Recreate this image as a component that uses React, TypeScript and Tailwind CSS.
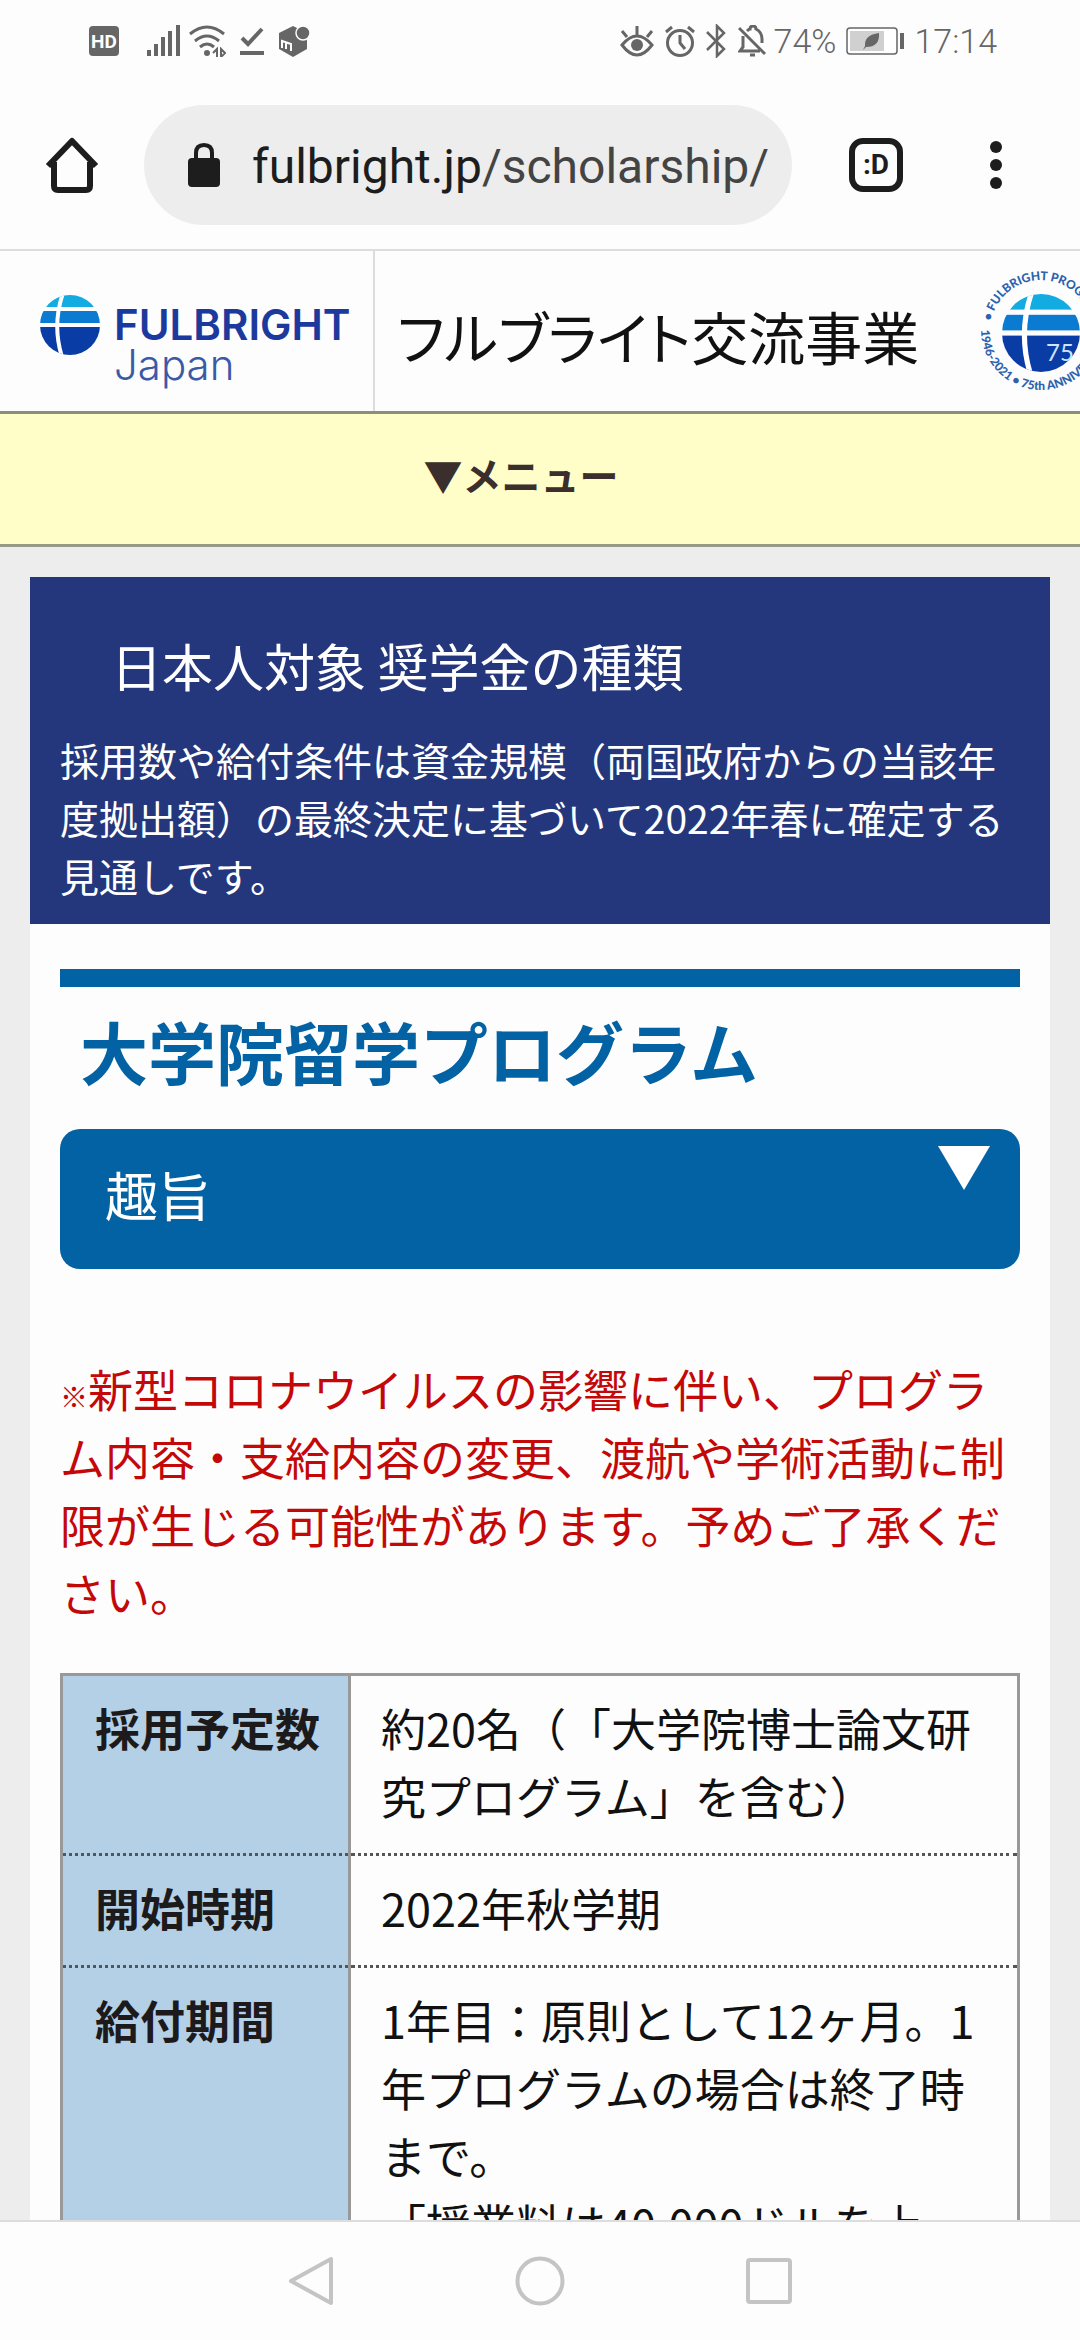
import type { ReactNode } from 'react'

const rows: { label: string; lines: string[] }[] = [
  { label: '採用予定数', lines: ['約20名（「大学院博士論文研究プログラム」を含む）'] },
  { label: '開始時期', lines: ['2022年秋学期'] },
  {
    label: '給付期間',
    lines: ['1年目：原則として12ヶ月。1年プログラムの場合は終了時まで。', '「授業料は40,000ドルを上'],
  },
]

function StatusBar() {
  return (
    <div className="flex h-[82px] shrink-0 items-center justify-between pl-[89px] pr-[83px] text-[#666]">
      <div className="flex items-center">
        <svg width="30" height="30" viewBox="0 0 30 30" aria-label="HD">
          <rect width="30" height="30" rx="4" fill="currentColor" />
          <text x="15" y="22" textAnchor="middle" fontFamily="Roboto" fontWeight="700" fontSize="19" fill="#fff">
            HD
          </text>
        </svg>
        <svg className="ml-7" width="34" height="32" viewBox="0 0 34 32" stroke="currentColor" strokeWidth="4">
          <path d="M2 31v-6M9 31V19M16 31V12M23 31V6M31 31V0" />
        </svg>
        <svg className="ml-2" width="37" height="32" viewBox="0 0 37 32" fill="none" stroke="currentColor" strokeWidth="3">
          <path d="M1 9Q18 -5 35 9M6 16Q18 6 30 16M11 22Q18 16 25 22" />
          <circle cx="18" cy="28" r="3" fill="currentColor" stroke="none" />
          <path d="M24 28l4-4v8M32 24v8l4-4z" strokeWidth="2" />
        </svg>
        <svg className="ml-3.5" width="24" height="30" viewBox="0 0 24 30" fill="none" stroke="currentColor" strokeWidth="4">
          <path d="M2 12l6 6L22 3M0 27h24" />
        </svg>
        <svg className="ml-3.5" width="32" height="34" viewBox="0 0 32 34">
          <path d="M15 2L1 9v16l14 8 14-8V9z" fill="currentColor" />
          <circle cx="25" cy="9" r="7" fill="currentColor" stroke="#fdfdfd" strokeWidth="1.5" />
          <path d="M4 24v-7l9 3v7M8 18v7" fill="none" stroke="#fdfdfd" strokeWidth="2" />
        </svg>
      </div>

      <div className="flex items-center font-[Roboto] text-[34px] leading-none font-light">
        <svg width="34" height="32" viewBox="0 0 34 32" fill="none" stroke="currentColor" strokeWidth="3">
          <path d="M2 20Q17 2 32 20Q17 40 2 20z M17 10V1M7 12L2 6M27 12l5-6" />
          <circle cx="17" cy="20" r="6" fill="currentColor" stroke="none" />
        </svg>
        <svg className="ml-2.5" width="32" height="32" viewBox="0 0 32 32" fill="none" stroke="currentColor" strokeWidth="3">
          <circle cx="16" cy="18" r="12.5" />
          <path d="M16 10v8l5 6M2 7l6-5M30 7l-6-5" />
        </svg>
        <svg className="ml-2.5" width="20" height="34" viewBox="0 0 20 34" fill="none" stroke="currentColor" strokeWidth="2.5">
          <path d="M1 8l17 17-7 7V2l7 7L1 26" />
        </svg>
        <svg className="ml-3" width="28" height="32" viewBox="0 0 28 32" fill="none" stroke="currentColor" strokeWidth="3">
          <path d="M1 3l26 26M5 11v11l-3 4h20M9 6q2-2 3-2 0-3 3-3t3 3q6 3 6 10v4" />
          <path d="M12 30h5" />
        </svg>
        <span className="ml-2">74%</span>
        <svg className="ml-2.5" width="60" height="28" viewBox="0 0 60 28">
          <rect x="1" y="1" width="50" height="26" rx="3" fill="#fff" stroke="currentColor" strokeWidth="1.5" />
          <rect x="4" y="4" width="34" height="20" fill="#d0d0d0" />
          <path d="M33 6q-15 2-14 13l-2 4 3-3q14 0 13-14z" fill="currentColor" />
          <rect x="54" y="6" width="4" height="16" fill="currentColor" />
        </svg>
        <span className="ml-2">17:14</span>
      </div>
    </div>
  )
}

function Toolbar() {
  return (
    <div className="flex h-[169px] shrink-0 items-start border-b-2 border-[#ddd] pt-[23px] pr-[78px] pl-[45px]">
      <button type="button" aria-label="ホーム" className="flex h-[120px] items-center">
        <svg width="54" height="56" viewBox="0 0 54 56" fill="none" stroke="#1d1d1d" strokeWidth="6">
          <path d="M3 29L27 4l24 25M9 25v24q0 4 4 4h28q4 0 4-4V25" strokeLinejoin="round" />
        </svg>
      </button>
      <div className="ml-[45px] flex h-[120px] min-w-0 flex-1 items-center rounded-full bg-[#ededed] pr-5 pl-11">
        <svg className="shrink-0" width="32" height="44" viewBox="0 0 32 44">
          <rect y="15" width="32" height="29" rx="4" fill="#1d1d1d" />
          <path d="M8 17v-7q0-8 8-8t8 8v7" fill="none" stroke="#1d1d1d" strokeWidth="4" />
        </svg>
        <span className="ml-8 pt-1 font-[Roboto] text-[48px] leading-none whitespace-nowrap text-[#1d1d1d]">
          fulbright.jp<span className="text-[#444]">/scholarship/</span>
        </span>
      </div>
      <button type="button" aria-label="タブ" className="ml-[57px] flex h-[120px] items-center">
        <span className="flex size-[54px] items-center justify-center rounded-[14px] border-6 border-[#1d1d1d] font-[Roboto] text-[28px] leading-none font-bold text-[#1d1d1d]">
          :D
        </span>
      </button>
      <button type="button" aria-label="その他" className="ml-[87px] flex h-[120px] flex-col items-center justify-center gap-1.5">
        <span className="size-3 rounded-full bg-[#1d1d1d]" />
        <span className="size-3 rounded-full bg-[#1d1d1d]" />
        <span className="size-3 rounded-full bg-[#1d1d1d]" />
      </button>
    </div>
  )
}

function Globe({ id, children }: { id: string; children?: ReactNode }) {
  return (
    <>
      <clipPath id={id}>
        <circle cx="30" cy="30" r="30" />
      </clipPath>
      <g clipPath={`url(#${id})`}>
        <rect width="60" height="12" fill="#12abe2" />
        <rect y="16" width="60" height="12" fill="#0a7bd0" />
        <rect y="32" width="60" height="28" fill="#0a3ca6" />
        <path d="M23 -2Q12 30 22 62" fill="none" stroke="#fff" strokeWidth="4" />
        {children}
      </g>
    </>
  )
}

function Seal() {
  return (
    <svg className="shrink-0" width="120" height="124" viewBox="-60 -62 120 124" aria-label="75th Anniversary">
      <g transform="translate(-39 -39) scale(1.3)">
        <Globe id="seal-globe" />
      </g>
      <text x="5" y="28" fontFamily="Lato" fontSize="24" fill="#cfe4ff">
        75
      </text>
      <path id="seal-top" d="M-50 -12A51 51 0 0 1 50 -12" fill="none" />
      <path id="seal-bottom" d="M-60 -3A60 60 0 0 0 60 -3" fill="none" />
      <g fontFamily="Lato" fontWeight="900" fontSize="12" fill="#2c62ae">
        <text>
          <textPath href="#seal-top">• FULBRIGHT PROGRAM</textPath>
        </text>
        <text>
          <textPath href="#seal-bottom">1946-2021 • 75th ANNIVERSARY</textPath>
        </text>
      </g>
    </svg>
  )
}

function SiteHeader() {
  return (
    <header className="flex h-[163px] items-stretch overflow-hidden border-b-3 border-[#8d8d80]">
      <a href="#" className="flex w-[375px] shrink-0 border-r-2 border-[#ddd] pt-[44px] pl-10">
        <svg className="shrink-0" width="60" height="60" viewBox="0 0 60 60">
          <Globe id="logo-globe" />
        </svg>
        <span className="ml-3.5 flex flex-col font-[Inter] text-[42px] leading-10">
          <span className="pt-2.5 font-semibold text-[#1c3a9e]">FULBRIGHT</span>
          <span className="font-light text-[#3a5aa8]">Japan</span>
        </span>
      </a>
      <div className="flex shrink-0 items-center pt-1 pl-[22px]">
        <span className="w-[584px] pt-1 text-[57px] leading-none whitespace-nowrap text-[#111] [font-feature-settings:'palt']">
          フルブライト交流事業
        </span>
        <Seal />
      </div>
    </header>
  )
}

export default function App() {
  return (
    <div
      className="flex h-screen flex-col overflow-hidden bg-[#fdfdfd] font-['Noto_Sans_CJK_JP',sans-serif] [text-spacing-trim:space-all]"
      lang="ja"
    >
      <StatusBar />
      <Toolbar />

      <main className="min-h-0 flex-1 overflow-y-auto bg-[#ededed] [scrollbar-width:none]">
        <div className="bg-[#fdfdfd]">
          <SiteHeader />
          <button
            type="button"
            className="flex h-[133px] w-full items-center justify-center border-b-3 border-[#999988] bg-[#fffdc8] pr-[38px] pb-2.5 text-[39px] leading-none font-bold text-[#3a2f2c]"
          >
            ▼メニュー
          </button>
        </div>

        <div className="mx-[30px] mt-[30px] bg-[#fdfdfd]">
          <section className="bg-[#24377c] px-[30px] pt-[58px] pb-5 text-white">
            <h1 className="pl-[51px] text-[51px] leading-[60px]">日本人対象 奨学金の種類</h1>
            <p className="mt-[35px] text-[39px] leading-[58px]">
              採用数や給付条件は資金規模（両国政府からの当該年度拠出額）の最終決定に基づいて2022年春に確定する見通しです。
            </p>
          </section>

          <section className="px-[30px] pt-[45px]">
            <h2 className="border-t-18 border-[#0262a4] pt-3.5 pl-5 text-[68px] leading-[100px] font-bold text-[#0262a4]">
              大学院留学プログラム
            </h2>
            <button
              type="button"
              className="mt-7 flex h-[140px] w-full items-start justify-between rounded-[20px] bg-[#0262a4] pt-[17px] pr-[30px] pl-[45px] text-left text-white"
            >
              <span className="pt-[18px] text-[53px] leading-[60px]">趣旨</span>
              <svg width="52" height="44" viewBox="0 0 52 44">
                <path d="M0 0h52L26 44z" fill="#fff" />
              </svg>
            </button>

            <p className="mt-[86px] text-[45px] leading-[68px] text-[#c40808]">
              <span className="inline-block align-middle text-[28px] leading-7 font-bold">※</span>
              新型コロナウイルスの影響に伴い、プログラム内容・支給内容の変更、渡航や学術活動に制限が生じる可能性があります。予めご了承ください。
            </p>

            <table className="mt-[46px] w-full border-collapse border-3 border-[#999] text-[45px] leading-[68px] text-[#111]">
              <tbody>
                {rows.map((row) => (
                  <tr key={row.label} className="border-b-3 border-dotted border-b-[#555]">
                    <th
                      scope="row"
                      className="w-[288px] border-r-3 border-r-[#999] bg-[#b4d0e6] pt-[18px] pb-[23px] pl-8 text-left align-top font-bold whitespace-nowrap text-[#1d1a1c] [border-right-style:solid]"
                    >
                      {row.label}
                    </th>
                    <td className="px-[30px] pt-[18px] pb-[23px] align-top">
                      {row.lines.map((line) => (
                        <div key={line}>{line}</div>
                      ))}
                    </td>
                  </tr>
                ))}
              </tbody>
            </table>
          </section>
        </div>
      </main>

      <nav className="flex h-[120px] shrink-0 items-center justify-center gap-[181px] border-t-2 border-[#ddd]">
        <button type="button" aria-label="戻る">
          <svg width="46" height="50" viewBox="0 0 46 50" fill="none" stroke="#c4c4c4" strokeWidth="4">
            <path d="M43 3v44L3 25z" strokeLinejoin="round" />
          </svg>
        </button>
        <button type="button" aria-label="ホーム画面">
          <svg width="50" height="50" viewBox="0 0 50 50" fill="none" stroke="#c4c4c4" strokeWidth="4">
            <circle cx="25" cy="25" r="22.5" />
          </svg>
        </button>
        <button type="button" aria-label="最近のアプリ">
          <svg width="46" height="46" viewBox="0 0 46 46" fill="none" stroke="#c4c4c4" strokeWidth="4">
            <rect x="2" y="2" width="42" height="42" rx="2" />
          </svg>
        </button>
      </nav>
    </div>
  )
}
